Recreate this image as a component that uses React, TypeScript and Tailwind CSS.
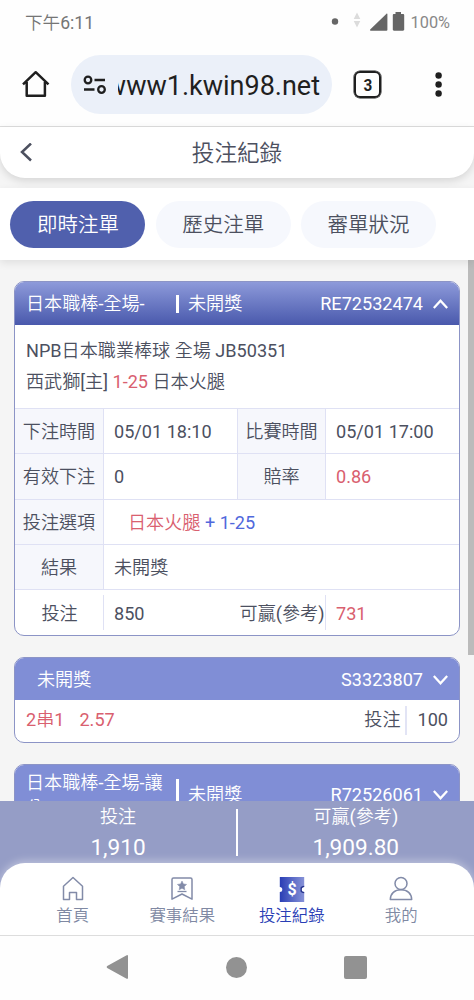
import type { ReactNode } from "react";

function Chevron({ up = false }: { up?: boolean }) {
  return (
    <svg className="ml-[10px] mt-[1px] h-[10px] w-[15px]" viewBox="0 0 15 10" fill="none" stroke="#fff" strokeWidth="2.3">
      <path d={up ? "M0.8 9 7.5 1.8 14.2 9" : "M0.8 1 7.5 8.2 14.2 1"} />
    </svg>
  );
}

function StatusBar() {
  return (
    <div className="flex h-[44px] shrink-0 items-center pr-[24px] pl-[25px] text-[#757575]">
      <span className="pt-px text-[17.600px] leading-[24px]">下午6:11</span>
      <svg className="ml-auto h-[22px] w-[74px]" viewBox="0 0 74 22">
        <circle cx="4" cy="10.5" r="3.2" fill="#666" />
        <path d="M26 1.5 29.3 8h-6.6zM26 16.500 29.300 10h-6.600z" fill="#dcdcdc" />
        <path d="M55.500 2.700c.4-.4.9-.2.9.4v15.700c0 .6-.3.9-.9.900H39.700c-.7 0-1-.6-.5-1.100z" fill="#666" />
        <path d="M64.500 1h5.500v2h2c.7 0 1.200.4 1.200 1.100v14.400c0 .7-.5 1.200-1.200 1.200h-9c-.7 0-1.200-.5-1.200-1.200V4.100c0-.7.5-1.100 1.200-1.100h1.500z" fill="#666" />
      </svg>
      <span className="ml-[6px] pt-[1px] text-[16.300px] leading-[24px] text-[#888]">100%</span>
    </div>
  );
}

function BrowserBar() {
  return (
    <div className="flex h-[83px] shrink-0 border-b-[1.5px] border-[#dedede] pt-[11px]">
      <svg className="mt-[15px] ml-[22px] h-[28px] w-[28px]" viewBox="0 0 28 28" fill="none" stroke="#1f1f1f" strokeWidth="2.500" strokeLinejoin="round">
        <path d="M1 14.300 13.700 2.200 26.500 14.300M4.700 12v13.800h18.200V12" />
      </svg>
      <div className="ml-[21px] flex h-[59px] w-[261px] items-center rounded-full bg-[#ebf0f9] pl-[12px]">
        <svg className="h-[20px] w-[24px] shrink-0" viewBox="0 0 24 20" fill="none" stroke="#1f1f1f" strokeWidth="2.3">
          <circle cx="5" cy="5" r="3.300" />
          <circle cx="18.500" cy="14.500" r="3.300" />
          <path d="M11.500 5H22M1 14.500h10.500" />
        </svg>
        <div className="ml-[11px] flex h-[40px] w-[205px] justify-end overflow-hidden text-[27px] leading-[43px] whitespace-nowrap text-[#1f1f1f]">
          <span className="pr-[3px]">www1.kwin98.net</span>
        </div>
      </div>
      <div className="mt-[16px] ml-[22px] flex h-[27px] w-[27px] items-center justify-center rounded-[6px] border-2 border-[#1f1f1f] ring-[0.500px] ring-[#1f1f1f] text-[#1f1f1f]">
        <span className="scale-x-90 text-[17px] leading-[22px] font-bold">3</span>
      </div>
      <svg className="mt-[17px] ml-[53px] h-[26px] w-[9px]" viewBox="0 0 9 26" fill="#1f1f1f">
        <circle cx="4.600" cy="3.500" r="3.200" />
        <circle cx="4.600" cy="12.500" r="3.200" />
        <circle cx="4.600" cy="21.500" r="3.200" />
      </svg>
    </div>
  );
}

function Tab({ active = false, children }: { active?: boolean; children: ReactNode }) {
  return (
    <button
      className={
        active
          ? "h-[47px] w-[135px] rounded-full bg-[#5060ad] text-[20.500px] leading-[46px] text-white"
          : "h-[47px] w-[135px] rounded-full bg-[#f6f8fd] text-[20.500px] leading-[46px] text-[#4c505f]"
      }
    >
      {children}
    </button>
  );
}

function Label({ children, last = false }: { children: ReactNode; last?: boolean }) {
  return (
    <div className={last ? "relative text-center whitespace-nowrap" : "overflow-hidden border-r-[1.500px] border-[#dfe1f4] bg-[#f6f7fc] text-center whitespace-nowrap"}>
      {children}
      {last && <span className="absolute top-[5px] right-0 h-[35px] w-[1.500px] bg-[#dfe1f4]" />}
    </div>
  );
}

function BetCard() {
  return (
    <section className="h-[355px] w-[446px] shrink-0 overflow-hidden rounded-[10px] border border-[#8c94c6] bg-white">
      <header className="flex h-[43px] items-center bg-linear-to-b from-[#8e9ada] to-[#4a59ac] pr-[11px] pl-[11px] leading-[43px] text-white">
        <span className="w-[150px]">日本職棒-全場-</span>
        <span className="h-[18px] w-[3px] bg-white" />
        <span className="ml-[9px]">未開獎</span>
        <span className="ml-auto">RE72532474</span>
        <Chevron up />
      </header>
      <div className="h-[83px] pt-[10px] pl-[11px] leading-[31px]">
        <p>NPB日本職業棒球 全場 JB50351</p>
        <p>
          西武獅[主] <span className="text-[#d9606f]">1-25</span> 日本火腿
        </p>
      </div>
      <div className="grid h-[45px] grid-cols-[89px_134px_88px_1fr] grid-rows-[minmax(0,1fr)] border-t-[1.500px] border-[#dfe1f4] leading-[46px]">
        <Label>下注時間</Label>
        <div className="border-r border-[#dfe1f4] pl-[10px]">05/01 18:10</div>
        <Label>比賽時間</Label>
        <div className="pl-[10px]">05/01 17:00</div>
      </div>
      <div className="grid h-[46px] grid-cols-[89px_134px_88px_1fr] grid-rows-[minmax(0,1fr)] border-t-[1.500px] border-[#dfe1f4] leading-[45px]">
        <Label>有效下注</Label>
        <div className="border-r border-[#dfe1f4] pl-[10px]">0</div>
        <Label>賠率</Label>
        <div className="pl-[10px] text-[#d9606f]">0.86</div>
      </div>
      <div className="grid h-[45px] grid-cols-[89px_1fr] grid-rows-[minmax(0,1fr)] border-t-[1.500px] border-[#dfe1f4] leading-[45px]">
        <Label>投注選項</Label>
        <div className="pl-[24px] text-[#5068dc]">
          <span className="text-[#d9606f]">日本火腿</span> + 1-25
        </div>
      </div>
      <div className="grid h-[45px] grid-cols-[89px_1fr] grid-rows-[minmax(0,1fr)] border-t-[1.500px] border-[#dfe1f4] leading-[45px]">
        <Label>結果</Label>
        <div className="pl-[10px]">未開獎</div>
      </div>
      <div className="grid h-[46px] grid-cols-[89px_134px_88px_1fr] grid-rows-[minmax(0,1fr)] border-t-[1.500px] border-[#dfe1f4] leading-[47px]">
        <Label last>投注</Label>
        <div className="pl-[10px]">850</div>
        <Label last>可贏(參考)</Label>
        <div className="pl-[10px] text-[#d9606f]">731</div>
      </div>
    </section>
  );
}

function NavItem({ label, active = false, children }: { label: string; active?: boolean; children: ReactNode }) {
  return (
    <div className={active ? "flex w-[109.500px] flex-col items-center text-[#293eb5]" : "flex w-[109.500px] flex-col items-center text-[#8089a3]"}>
      <svg className="h-[26px] w-[26px]" viewBox="0 0 26 26" fill="none" stroke="#828ba8" strokeWidth="1.500" strokeLinejoin="round">
        {children}
      </svg>
      <span className="text-[16.400px] leading-[28px]">{label}</span>
    </div>
  );
}

export default function App() {
  return (
    <div className="flex h-[1000px] w-[474px] flex-col overflow-hidden bg-[#fefefe] font-['Roboto','Noto_Sans_CJK_TC_DemiLight','Noto_Sans_CJK_TC',sans-serif] text-[18.100px] text-[#4c505f]">
      <StatusBar />
      <BrowserBar />
      <main className="flex h-[808px] shrink-0 flex-col bg-[#f5f5f5]">
        <div className="z-10 flex h-[51px] shrink-0 items-center rounded-b-[25px] bg-white shadow-[0_3px_8px_rgba(0,0,0,0.13)]">
          <svg className="ml-[19px] h-[20px] w-[14px]" viewBox="0 0 14 20" fill="none" stroke="#4c505f" strokeWidth="2.500">
            <path d="M12 .500 3 9l9 8.500" />
          </svg>
          <h1 className="w-[408px] pt-px text-center text-[22.600px] leading-[51px]">投注紀錄</h1>
        </div>
        <div className="z-10 mt-[10px] flex h-[72px] shrink-0 gap-[10.300px] bg-white pt-[13px] pl-[10.400px] shadow-[0_3px_8px_rgba(0,0,0,0.09)]">
          <Tab active>即時注單</Tab>
          <Tab>歷史注單</Tab>
          <Tab>審單狀況</Tab>
        </div>
        <div className="relative flex h-[541px] shrink-0 flex-col gap-[21px] overflow-hidden pt-[21px] pl-[14px]">
          <BetCard />
          <section className="h-[86px] w-[446px] shrink-0 overflow-hidden rounded-[10px] border border-[#8c94c6] bg-white">
            <header className="flex h-[42px] items-center bg-[#808ed6] pr-[11px] pl-[22px] leading-[43px] text-white">
              <span>未開獎</span>
              <span className="ml-auto">S3323807</span>
              <Chevron />
            </header>
            <div className="flex h-[40px] items-center pr-[11px] pl-[11px] leading-[40px]">
              <span className="text-[#d9606f]">2串1</span>
              <span className="ml-[15px] text-[#d9606f]">2.57</span>
              <span className="ml-auto">投注</span>
              <span className="ml-[5px] h-[29px] w-[2px] bg-[#e2e4f5]" />
              <span className="ml-[10px]">100</span>
            </div>
          </section>
          <section className="h-[100px] w-[446px] shrink-0 overflow-hidden rounded-[10px] border border-[#8c94c6] bg-white">
            <header className="flex h-[59px] items-center bg-[#808ed6] pr-[11px] pl-[11px] text-white">
              <span className="w-[150px] leading-[25px]">日本職棒-全場-讓分</span>
              <span className="h-[32px] w-[3px] bg-white" />
              <span className="ml-[9px]">未開獎</span>
              <span className="ml-auto">R72526061</span>
              <Chevron />
            </header>
          </section>
          <div className="absolute top-0 right-0 h-[395px] w-[6px] bg-[#bbbbbb]" />
        </div>
        <div className="flex h-[134px] shrink-0 flex-col bg-[#959dc6]">
          <div className="flex h-[62px] text-center text-white">
            <div className="w-[236px]">
              <p className="h-[31px] leading-[31px]">投注</p>
              <p className="text-[22.600px] leading-[32px]">1,910</p>
            </div>
            <div className="mt-[8px] h-[47px] w-[1.500px] bg-white" />
            <div className="flex-1">
              <p className="h-[31px] leading-[31px]">可贏(參考)</p>
              <p className="text-[22.600px] leading-[32px]">1,909.80</p>
            </div>
          </div>
          <nav className="flex h-[72px] rounded-t-[25px] bg-white pt-[13px] pl-[18px] shadow-[0_-2px_8px_rgba(255,255,255,0.4)]">
            <NavItem label="首頁">
              <path d="M3.500 10.200 13 1.500l9.500 8.700v13.300h-6v-7h-7v7h-6z" />
            </NavItem>
            <NavItem label="賽事結果">
              <path d="M3 3.500Q3 2 4.500 2h17Q23 2 23 3.500v19.700L13 18 3 23.200z" />
              <path d="m13 5 1.400 2.900 3.200.5-2.300 2.200.5 3.200-2.800-1.500-2.800 1.500.5-3.200-2.300-2.200 3.200-.5z" fill="#828ba8" strokeWidth=".5" />
              <path d="M8.500 15.500h9" strokeWidth="1.300" />
            </NavItem>
            <NavItem label="投注紀錄" active>
              <defs>
                <linearGradient id="ticket">
                  <stop stopColor="#293eb5" />
                  <stop offset="1" stopColor="#8792d7" />
                </linearGradient>
              </defs>
              <path d="M.8 1h24.400v10a2.300 2.300 0 0 0 0 5v10H.8V16a2.300 2.300 0 0 0 0-5z" fill="url(#ticket)" stroke="none" />
              <path d="M21.500 11.500v4q1 1.500 3.700 1.700V16a2.300 2.300 0 0 1 0-5v-1.200q-2.700.2-3.700 1.700z" fill="#26348c" stroke="none" />
              <text x="13" y="19" textAnchor="middle" fontSize="16" fontWeight="bold" fill="#fff" stroke="none">$</text>
            </NavItem>
            <NavItem label="我的">
              <circle cx="13" cy="7.500" r="6" />
              <path d="M2.300 23.500c0-6 4.500-9.800 10.700-9.800s10.700 3.800 10.700 9.800z" />
            </NavItem>
          </nav>
        </div>
      </main>
      <footer className="flex h-[65px] items-center border-t-[1.500px] border-[#dddddd] bg-[#fefefe] pb-[2px]">
        <svg className="ml-[106px] h-[26px] w-[23px]" viewBox="0 0 23 26">
          <path d="M1.200 12.100 20.200 1.400Q22 .5 22 2.200v21.600q0 1.700-1.800.8L1.200 13.900q-1.200-.9 0-1.800z" fill="#929292" />
        </svg>
        <div className="ml-[97px] h-[21px] w-[21px] rounded-full bg-[#929292]" />
        <div className="ml-[97px] h-[23px] w-[23px] rounded-[2px] bg-[#929292]" />
      </footer>
    </div>
  );
}
